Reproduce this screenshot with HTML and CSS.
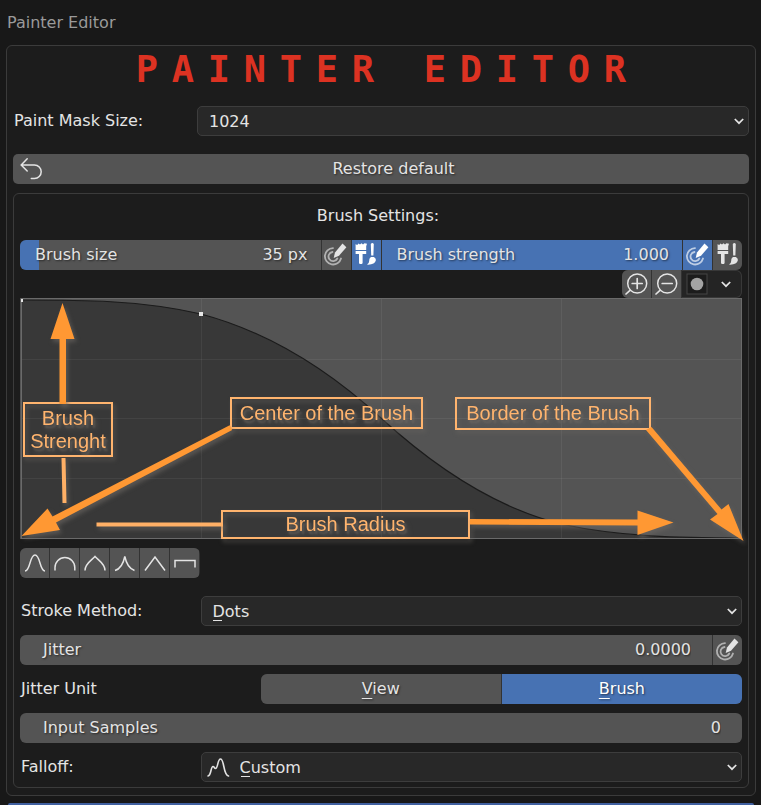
FILE: index.html
```html
<!DOCTYPE html>
<html lang="en">
<head>
<meta charset="utf-8">
<meta name="viewport" content="width=device-width, initial-scale=1">
<title>Painter Editor</title>
<link rel="stylesheet" href="styles.css">
</head>
<body>
<svg class="sprite" aria-hidden="true">
  <symbol id="chevron" viewBox="0 0 12 12"><path d="M1.8 4 6 8.2 10.2 4" fill="none" stroke="currentColor" stroke-width="1.7"/></symbol>
  <symbol id="pen" viewBox="0 0 30 30">
    <g fill="none" stroke="currentColor" stroke-width="1.8" stroke-linecap="round" opacity=".65">
      <path d="M12 8.1A8.2 8.2 0 1 0 20 18.500"/>
      <path d="M11.500 12A4.600 4.600 0 1 0 16.300 18.500"/>
    </g>
    <path d="M21.500 3.600 25.400 7.300 18 15.800 12.700 18 14 12.400Z" fill="currentColor"/>
  </symbol>
  <symbol id="brushes" viewBox="0 0 30 30">
    <path d="M4.5 4.3 6.3 5 7.4 3.5 9 4.6 10.5 3.3 12 4.6 13.5 3.2 16 3.8 15.2 6.2V10H4.6V6.5ZM4.6 11H15.2V14H11.6V23.2Q9.8 25 8 23.2V14H4.6Z" fill="currentColor"/>
    <path d="M19.8 4Q21.3 1.8 22.8 4L22.4 15.6H20.2ZM20 17H22.8Q25.2 18 24.8 20.5 23.8 25 16 24.6 18.6 23 18.2 20 18.4 17.8 20 17Z" fill="currentColor"/>
  </symbol>
</svg>

<header class="panel-title">Painter Editor</header>

<main class="panel">
  <h1 class="logo"><span>P</span><span>A</span><span>I</span><span>N</span><span>T</span><span>E</span><span>R</span><span> </span><span>E</span><span>D</span><span>I</span><span>T</span><span>O</span><span>R</span></h1>

  <div class="row quarter">
    <label for="mask-size">Paint Mask Size:</label>
    <div class="select">
      <select id="mask-size"><option>1024</option><option>2048</option></select>
      <svg class="chevron" aria-hidden="true"><use href="#chevron"/></svg>
    </div>
  </div>

  <button class="restore" type="button">
    <svg class="icon" viewBox="0 0 30 30" aria-hidden="true"><path d="M14.2 4.8 8.2 11 14.2 17M8.4 11H21.5A6.7 6.7 0 0 1 21.5 24.4H18.3" fill="none" stroke="currentColor" stroke-width="1.5" stroke-linecap="round"/></svg>
    <span>Restore default</span>
  </button>

  <section class="settings">
    <h2>Brush Settings:</h2>

    <div class="brush-tools">
      <div class="strip">
        <div class="field size">
          <input id="size" type="range" min="0" max="500" value="35">
          <label for="size">Brush size</label>
          <output for="size">35 px</output>
        </div>
        <button type="button" aria-label="Size pressure"><svg class="icon" aria-hidden="true"><use href="#pen"/></svg></button>
        <button type="button" class="on" aria-label="Unified size"><svg class="icon" aria-hidden="true"><use href="#brushes"/></svg></button>
        <div class="field strength">
          <input id="strength" type="range" min="0" max="1" step="0.001" value="1">
          <label for="strength">Brush strength</label>
          <output for="strength">1.000</output>
        </div>
        <button type="button" class="on" aria-label="Strength pressure"><svg class="icon" aria-hidden="true"><use href="#pen"/></svg></button>
        <button type="button" aria-label="Unified strength"><svg class="icon" aria-hidden="true"><use href="#brushes"/></svg></button>
      </div>

      <div class="strip view-tools">
        <button type="button" aria-label="Zoom in"><svg class="icon" viewBox="0 0 30 30" aria-hidden="true"><path d="M8 21.300 4 25M10.200 14.500H20.200M15.200 9.500V19.500" fill="none" stroke="currentColor" stroke-width="1.700" stroke-linecap="round"/><circle cx="15.200" cy="14.500" r="9.500" fill="none" stroke="currentColor" stroke-width="1.500"/></svg></button>
        <button type="button" aria-label="Zoom out"><svg class="icon" viewBox="0 0 30 30" aria-hidden="true"><path d="M8 21.300 4 25M10.200 14.500H20.200" fill="none" stroke="currentColor" stroke-width="1.700" stroke-linecap="round"/><circle cx="15.200" cy="14.500" r="9.500" fill="none" stroke="currentColor" stroke-width="1.500"/></svg></button>
        <button type="button" class="clip" aria-label="Clipping options">
          <svg class="icon" viewBox="0 0 30 30" aria-hidden="true"><rect x="5" y="5" width="20" height="20" fill="#1c1c1c" stroke="#454545"/><circle cx="15" cy="15" r="6.300" fill="#a3a3a3"/></svg>
          <svg class="chevron" aria-hidden="true"><use href="#chevron"/></svg>
        </button>
      </div>

      <div class="curve">
        <svg class="plot" viewBox="20 298 722 241" preserveAspectRatio="none" role="img" aria-label="Brush falloff curve">
          <rect x="20" y="298" width="722" height="241" fill="#545454"/>
          <path d="M21 300C81 300 141 300 201 314C261 330 321 363 381 418C441 473 501 509 561 524C621 537 681 538 742 538H21Z" fill="#383838"/>
          <path d="M201.500 299V538M381.500 299V538M561.500 299V538M21 359.500H742M21 418.500H742M21 478.500H742" stroke="#fff" stroke-opacity=".06" fill="none"/>
          <path d="M21 300C81 300 141 300 201 314C261 330 321 363 381 418C441 473 501 509 561 524C621 537 681 538 742 538" fill="none" stroke="#1b1b1b" stroke-width="1.200"/>
          <rect x="21.500" y="298.500" width="720" height="240" fill="none" stroke="#6a6a6a"/>
          <path d="M21 299H23V302H21ZM199 312H203V316H199Z" fill="#e6e6e6"/>
        </svg>
        <span class="note note-strength">Brush<br>Strenght</span>
        <span class="note note-center">Center of the Brush</span>
        <span class="note note-border">Border of the Brush</span>
        <span class="note note-radius">Brush Radius</span>
        <svg class="arrows" viewBox="20 298 722 241" preserveAspectRatio="none" aria-hidden="true">
          <g fill="#ff9833">
            <path d="M62.500 303 74.500 339H66V404H59.500V339H50.500Z"/>
            <path d="M229.700 425.300 232.200 430 56 522.500 60 530 21.500 536 47.500 508.500 52.500 516.500Z"/>
            <path d="M646 430 651.500 427 721.500 509.500 728.500 504 743.500 541 710 519.500 717.500 514Z"/>
            <path d="M470 519 637.500 519.500V510.500L673.500 522.500 637.500 535V525.500L470 524.500Z"/>
          </g>
          <path d="M63.500 458 64.500 503M96.500 524.500H223" fill="none" stroke="#ffb066" stroke-width="4"/>
        </svg>
      </div>
    </div>

    <div class="strip presets">
      <button type="button" aria-label="Smooth"><svg class="icon" viewBox="0 0 30 30" aria-hidden="true"><path d="M5 23C10.500 23 9.500 7 15 7S19.500 23 25 23"/></svg></button>
      <button type="button" aria-label="Round"><svg class="icon" viewBox="0 0 30 30" aria-hidden="true"><path d="M5 22.500V19.500A9.900 9.900 0 0 1 24.800 19.500V22.500"/></svg></button>
      <button type="button" aria-label="Root"><svg class="icon" viewBox="0 0 30 30" aria-hidden="true"><path d="M5 22.500C5 15.500 11.500 12.500 15 8.500C18.500 12.500 25 15.500 25 22.500"/></svg></button>
      <button type="button" aria-label="Sharp"><svg class="icon" viewBox="0 0 30 30" aria-hidden="true"><path d="M5 22.500C11.500 20.500 13.500 15 14.800 8.500C16.200 15 18.500 20.500 24.500 22.500"/></svg></button>
      <button type="button" aria-label="Linear"><svg class="icon" viewBox="0 0 30 30" aria-hidden="true"><path d="M5 22.500 15 9 25 22.500"/></svg></button>
      <button type="button" aria-label="Constant"><svg class="icon" viewBox="0 0 30 30" aria-hidden="true"><path d="M5 19.500V12.500H25V19.500"/></svg></button>
    </div>

    <div class="rows">
      <div class="row quarter">
        <label for="stroke">Stroke Method:</label>
        <div class="select">
          <select id="stroke"><option>Dots</option><option>Space</option></select>
          <i class="key"></i>
          <svg class="chevron" aria-hidden="true"><use href="#chevron"/></svg>
        </div>
      </div>

      <div class="strip">
        <div class="field number">
          <input id="jitter" type="text" value="0.0000">
          <label for="jitter">Jitter</label>
        </div>
        <button type="button" aria-label="Jitter pressure"><svg class="icon" aria-hidden="true"><use href="#pen"/></svg></button>
      </div>

      <div class="row third">
        <span id="unit">Jitter Unit</span>
        <div class="strip choices" role="group" aria-labelledby="unit">
          <button type="button"><span><u>V</u>iew</span></button>
          <button type="button" class="on" aria-pressed="true"><span><u>B</u>rush</span></button>
        </div>
      </div>

      <div class="strip">
        <div class="field number">
          <input id="samples" type="text" value="0">
          <label for="samples">Input Samples</label>
        </div>
      </div>

      <div class="row quarter">
        <label for="falloff">Falloff:</label>
        <div class="select with-icon">
          <select id="falloff"><option>Custom</option><option>Smooth</option></select>
          <svg class="icon" viewBox="0 0 30 30" aria-hidden="true"><path d="M7 24C10.500 23.500 9.500 14.500 12 14.500C13.300 14.500 13.300 16.500 14.500 16.500C17 16.500 16.500 7 19.500 7C23.500 7 22 23 27.500 24" fill="none" stroke="currentColor" stroke-width="1.600" stroke-linecap="round"/></svg>
          <i class="key"></i>
          <svg class="chevron" aria-hidden="true"><use href="#chevron"/></svg>
        </div>
      </div>
    </div>
  </section>
</main>
<div class="next-panel"></div>
</body>
</html>
```
FILE: styles.css
```css
* { box-sizing: border-box; }

body {
  margin: 0;
  padding: 0 5px 0 6px;
  background: #181818;
  color: #e4e4e4;
  font: 16px/30px "DejaVu Sans", sans-serif;
  overflow-x: hidden;
}

.sprite { display: none; }

button, input, select {
  margin: 0;
  border: 0;
  font: inherit;
  color: inherit;
}

.panel-title {
  padding: 8px 1px 7px;
  color: #9a9a9a;
}

.panel {
  padding: 0 6px 7px;
  border: 1px solid #3b3b3b;
  border-radius: 6px;
  background: #1c1c1c;
}

.logo {
  display: grid;
  grid-template-columns: repeat(14, 36px);
  justify-content: center;
  margin: 0 0 12px;
  color: #dc3222;
  font: bold 37px/48px "DejaVu Sans Mono", monospace;
  text-align: center;
}

.row { display: grid; }
.row.quarter { grid-template-columns: 1fr 3fr; }
.row.third { grid-template-columns: 1fr 2fr; }
.row > label, .row > span { padding-left: 1px; }

.icon {
  display: block;
  flex: none;
  width: 30px;
  height: 30px;
}

.chevron { width: 12px; height: 12px; }

.select { display: grid; align-items: center; }
.select > * { grid-area: 1 / 1; }

.select select {
  width: 100%;
  height: 30px;
  padding: 0 30px 0 11px;
  appearance: none;
  border: 1px solid #3d3d3d;
  border-radius: 5px;
  background: #282828;
}

.select .chevron {
  justify-self: end;
  margin-right: 4px;
  pointer-events: none;
}

.select.with-icon select { padding-left: 38px; }
.with-icon .icon { pointer-events: none; }

.key {
  align-self: end;
  width: 9px;
  height: 1px;
  margin: 0 0 5px 12px;
  background: currentColor;
}

.with-icon .key { margin-left: 40px; }

.restore {
  display: grid;
  align-items: center;
  width: 100%;
  height: 30px;
  margin: 18px 0 9px;
  padding: 0;
  border-radius: 5px;
  background: #545454;
  text-shadow: 1px 1px 2px #0008;
}

.restore > * { grid-area: 1 / 1; }
.restore > span { padding-left: 25px; }

.settings {
  padding: 7px 6px 5px;
  border: 1px solid #3b3b3b;
  border-radius: 6px;
}

.settings h2 {
  margin: 0 6px 9px 0;
  font-size: 16px;
  font-weight: normal;
  text-align: center;
}

.strip {
  display: flex;
  gap: 1px;
  height: 30px;
  overflow: hidden;
  border-radius: 6px;
  background: #333;
}

.strip > button {
  display: flex;
  justify-content: center;
  align-items: center;
  width: 29px;
  padding: 0;
  background: #545454;
}

.strip > button.on { background: #4772b3; color: #fff; }

.field {
  display: grid;
  flex: 1;
  grid-template-columns: 1fr auto;
  text-shadow: 1px 1px 2px #0008;
}

.field input {
  grid-area: 1 / 1 / 2 / 3;
  width: 100%;
  height: 30px;
  appearance: none;
  background: #545454;
}

.field input::-webkit-slider-thumb { appearance: none; width: 1px; }

.field label, .field output { z-index: 1; grid-row: 1; pointer-events: none; }
.field label { grid-column: 1; padding-left: 15px; }
.field output { grid-column: 2; padding-right: 13px; }

.size input { background: linear-gradient(to right, #4772b3 19px, #545454 19px); }
.strength input { background: #4772b3; }

.number label { padding-left: 23px; }
.number input { padding: 0 21px; text-align: right; text-shadow: inherit; }

.view-tools {
  width: 120px;
  height: 28px;
  margin-left: auto;
}

.view-tools > .clip {
  flex: 1;
  justify-content: flex-start;
  gap: 8px;
  border: 1px solid #383838;
  border-left: 0;
  border-radius: 0 6px 6px 0;
  background: #242424;
}

.curve { position: relative; height: 241px; }

.plot, .arrows {
  position: absolute;
  inset: 0;
  width: 100%;
  height: 100%;
}

.arrows {
  overflow: visible;
  filter: drop-shadow(2px 3px 2px #6f6a6599);
  pointer-events: none;
}

.note {
  position: absolute;
  display: grid;
  place-content: center;
  border: 2px solid #ffb46e;
  color: #ffb46e;
  font: 20px/23px "Liberation Sans", sans-serif;
  text-align: center;
  white-space: nowrap;
  text-shadow: 2px 3px 2px #77706a66;
  filter: drop-shadow(2px 3px 2px #6f6a6599);
}

.note-strength { left: 3px; top: 104px; width: 90px; height: 55px; }
.note-center { left: 210px; top: 99px; width: 193px; height: 32px; }
.note-border { right: 91px; top: 99px; width: 196px; height: 33px; }
.note-radius { left: 201px; top: 212px; width: 249px; height: 29px; }

.presets { width: 180px; margin: 9px 0 18px; }

.presets path {
  fill: none;
  stroke: currentColor;
  stroke-width: 1.5px;
}

.rows { display: grid; gap: 9px; }

.choices > button {
  flex: 1;
  text-shadow: 1px 1px 2px #0008;
}

.choices u { text-underline-offset: 4px; text-decoration-thickness: 1px; }

.next-panel {
  height: 2px;
  margin: 7px 2px 0;
  border-radius: 2px 2px 0 0;
  background: #4060a0;
}
```
